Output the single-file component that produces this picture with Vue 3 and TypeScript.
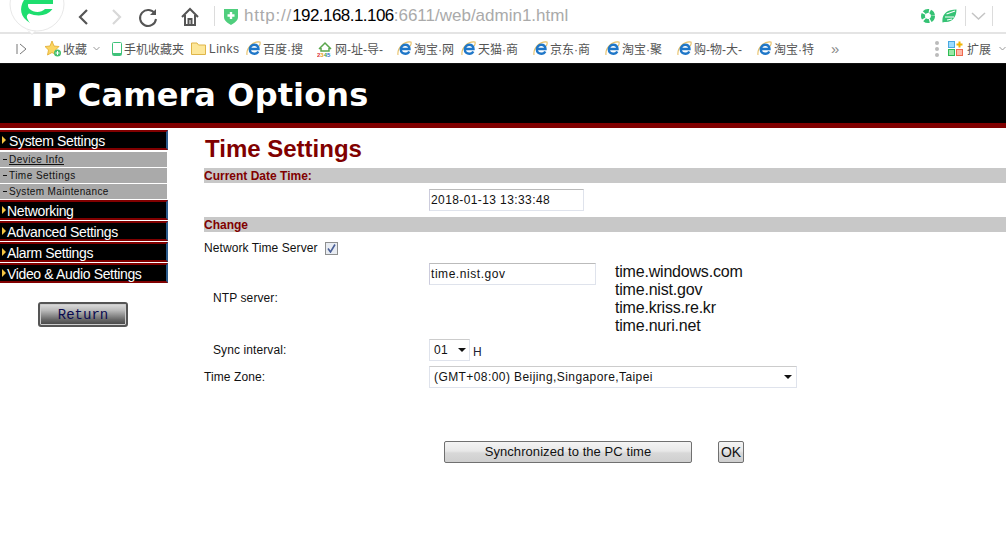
<script setup lang="ts">
interface Mark { label: string; kind: string; width: number }
const marks: Mark[] = [
  { label: '手机收藏夹', kind: 'phone', width: 79 },
  { label: 'Links', kind: 'folder', width: 55 },
  { label: '百度·搜', kind: 'ie', width: 71 },
  { label: '网-址-导-', kind: 'home', width: 80 },
  { label: '淘宝·网', kind: 'ie', width: 64 },
  { label: '天猫·商', kind: 'ie', width: 72 },
  { label: '京东·商', kind: 'ie', width: 72 },
  { label: '淘宝·聚', kind: 'ie', width: 72 },
  { label: '购-物-大-', kind: 'ie', width: 80 },
  { label: '淘宝·特', kind: 'ie', width: 75 }
]
const subs = ['Device Info', 'Time Settings', 'System Maintenance']
const menus = ['Networking', 'Advanced Settings', 'Alarm Settings', 'Video & Audio Settings']
const servers = ['time.windows.com', 'time.nist.gov', 'time.kriss.re.kr', 'time.nuri.net']
</script>

<template>
  <div class="page">
    <svg class="logo" width="70" height="36" viewBox="0 0 70 36">
      <path d="M28 30.500 L32 34.500 L36 30.500" fill="#fff" stroke="#e6e6e6"/>
      <circle cx="37" cy="4" r="27" fill="#fff" stroke="#e8e8e8"/>
      <path d="M27 0 H53 V4 H27 Z" fill="#1ede6f"/>
      <path d="M24 0 C19 8 20 17 30 23 C26 18 26 15 29 13.500 C38 17 47 16 52.500 9 H45 C41 13 34 13 29.500 9 C27 6 28 3 30 0 Z" fill="#1ede6f"/>
    </svg>
    <div class="toolbar">
      <svg class="nav" width="24" height="24" viewBox="0 0 24 24"><path d="M15 5 L8 12 L15 19" fill="none" stroke="#555" stroke-width="2.200"/></svg>
      <svg class="nav" width="24" height="24" viewBox="0 0 24 24"><path d="M9 5 L16 12 L9 19" fill="none" stroke="#d8d8d8" stroke-width="2.200"/></svg>
      <svg class="nav" width="24" height="24" viewBox="0 0 24 24"><path d="M19 9 A8 8 0 1 0 20 14" fill="none" stroke="#555" stroke-width="2"/><path d="M20 4 V10 H14 Z" fill="#555"/></svg>
      <svg class="nav home" width="24" height="24" viewBox="0 0 24 24"><path d="M4 12 L12 4 L20 12 M7 10 V20 H17 V10 M10.500 20 V14 H13.500 V20" fill="none" stroke="#555" stroke-width="2"/></svg>
      <span class="divider"></span>
      <svg class="shield" width="14" height="17" viewBox="0 0 14 17"><path d="M0 1 H14 V9 C14 13 10 15 7 17 C4 15 0 13 0 9 Z" fill="#4fce7d"/><path d="M7 4 V11 M3.500 7.500 H10.500" stroke="#fff" stroke-width="2.400"/></svg>
      <div class="url"><span class="scheme">http://</span><b>192.168.1.106</b><span class="rest">:6611/web/admin1.html</span></div>
      <svg class="tool-a" width="14" height="14" viewBox="0 0 14 14"><circle cx="7" cy="7" r="5" fill="none" stroke="#35c274" stroke-width="4" stroke-dasharray="5 1.300"/></svg>
      <svg class="tool-b" width="15" height="14" viewBox="0 0 15 14"><path d="M.5 13.500 C-.5 5 5 .5 14.500 .5 C14.500 8 10 14 2.500 13 Z" fill="#35c274"/><path d="M3 8 H12 M4.500 5 L13 2 M5 11 L10 10" stroke="#fff" stroke-width="1.100"/></svg>
      <span class="divider small"></span>
      <svg class="chev" width="15" height="9" viewBox="0 0 15 9"><path d="M1 1 L7.500 7 L14 1" fill="none" stroke="#c4c4c4" stroke-width="1.500"/></svg>
      <span class="divider tiny"></span>
      <span class="cut">目</span>
    </div>
    <div class="bookmarks">
      <svg class="side-toggle" width="11" height="12" viewBox="0 0 11 12"><path d="M1 1 V11 M4 1 L10 6 L4 11" fill="none" stroke="#777" stroke-width="1"/></svg>
      <svg class="star" width="16" height="16" viewBox="0 0 16 16"><path d="M7 0 L9 5 L14 5.500 L10.500 9 L11.500 14 L7 11.500 L2.500 14 L3.500 9 L0 5.500 L5 5 Z" fill="#fbd561" stroke="#e1aa2c" stroke-width=".8"/><circle cx="12.500" cy="12" r="3.500" fill="#45c06f"/><path d="M12.500 10 V14 M10.500 12 H14.500" stroke="#fff"/></svg>
      <span class="mark-text fav">收藏</span>
      <svg class="fav-caret" width="7" height="5" viewBox="0 0 7 5"><path d="M.5 1 L3.500 4 L6.500 1" fill="none" stroke="#999"/></svg>
      <div v-for="m in marks" :key="m.label + m.width" class="mark" :class="'mark-' + m.kind" :style="{ width: m.width + 'px' }">
        <svg v-if="m.kind === 'phone'" width="10" height="14" viewBox="0 0 10 14"><rect x=".5" y=".5" width="9" height="13" rx="1" fill="#fff" stroke="#3fc27a"/><rect x="1" y="11" width="8" height="2" fill="#3fc27a"/></svg>
        <svg v-else-if="m.kind === 'folder'" width="15" height="13" viewBox="0 0 15 13"><path d="M.5 12.500 V1 H6 L7.500 3 H14.500 V12.500 Z" fill="#fde79a" stroke="#dfb548"/></svg>
        <svg v-else-if="m.kind === 'home'" width="16" height="16" viewBox="0 0 16 16"><path d="M2 8 L8 2 L14 8 M4 7 V10 H12 V7" fill="none" stroke="#5aa64c" stroke-width="1.500"/><text x="0" y="16" font-size="6" font-weight="700" font-family="Liberation Sans, sans-serif"><tspan fill="#d33">2</tspan><tspan fill="#e9a31b">3</tspan><tspan fill="#3a9a44">4</tspan><tspan fill="#2b70c9">5</tspan></text></svg>
        <svg v-else width="15" height="15" viewBox="0 0 15 15"><path d="M1 14 C0 7 7 0 14 1 C14.500 3 14 4 13 5" fill="none" stroke="#e6c067" stroke-width="1.100"/><path d="M4 8 H12.500 C12.500 5 10.500 3.800 8.300 3.800 C5.500 3.800 3.800 6 3.800 8.500 C3.800 11 5.800 12.700 8.300 12.700 C10 12.700 11.500 12 12.300 10.500" fill="none" stroke="#1f77c8" stroke-width="2.400"/></svg>
        <span class="mark-text">{{ m.label }}</span>
      </div>
      <span class="more">»</span>
      <span class="grip"><i></i><i></i><i></i></span>
      <svg class="ext" width="15" height="15" viewBox="0 0 15 15"><rect x=".5" y=".5" width="6" height="6" fill="#9bdcff" stroke="#4aa8e0"/><rect x=".5" y="8.500" width="6" height="6" fill="#9be8a8" stroke="#2fbb54"/><rect x="8.500" y="8.500" width="6" height="6" fill="#ffb9a8" stroke="#ee6a50"/><path d="M11.500 .5 V6.500 M8.500 3.500 H14.500" stroke="#f0b400" stroke-width="2"/></svg>
      <span class="mark-text ext-text">扩展</span>
      <svg class="ext-caret" width="7" height="5" viewBox="0 0 7 5"><path d="M.5 1 L3.500 4 L6.500 1" fill="none" stroke="#999"/></svg>
    </div>

    <header class="banner"><h1>IP Camera Options</h1></header>

    <div class="body">
      <aside class="sidebar">
        <div class="menu first"><span class="arrow"></span><span class="menu-label">System Settings</span></div>
        <div class="subs">
          <div v-for="(s, i) in subs" :key="s" class="sub" :class="{ active: i === 0, narrow: i === 2 }"><span class="dash"></span><span class="sub-label">{{ s }}</span></div>
        </div>
        <div v-for="m in menus" :key="m" class="menu"><span class="arrow"></span><span class="menu-label">{{ m }}</span></div>
        <div class="return-wrap"><button class="return" type="button">Return</button></div>
      </aside>

      <main class="content">
        <h2>Time Settings</h2>
        <div class="bar">Current Date Time:</div>
        <div class="row date-row">
          <div class="field date">2018-01-13 13:33:48</div>
        </div>
        <div class="bar">Change</div>
        <div class="row check-row">
          <span class="label">Network Time Server</span>
          <span class="check"><svg width="9" height="9" viewBox="0 0 9 9"><path d="M1 4.500 L3.500 8 L8 .5" fill="none" stroke="#4a5f97" stroke-width="1.600"/></svg></span>
        </div>
        <div class="grid ntp">
          <span class="label indented ntp-label">NTP server:</span>
          <div class="field-wrap">
            <div class="field ntp-field">time.nist.gov</div>
            <div class="servers"><div v-for="s in servers" :key="s">{{ s }}</div></div>
          </div>
        </div>
        <div class="grid sync">
          <span class="label indented">Sync interval:</span>
          <div class="sync-value">
            <div class="select short"><span>01</span><i class="caret"></i></div>
            <span class="unit">H</span>
          </div>
        </div>
        <div class="grid zone">
          <span class="label">Time Zone:</span>
          <div class="select wide"><span>(GMT+08:00) Beijing,Singapore,Taipei</span><i class="caret"></i></div>
        </div>
        <div class="actions">
          <button class="btn pc" type="button">Synchronized to the PC time</button>
          <button class="btn ok" type="button">OK</button>
        </div>
      </main>
    </div>
  </div>
</template>

<style>
html, body { margin: 0; background: #fff; overflow: hidden; }
</style>

<style scoped>
.page { width: 1006px; height: 551px; position: relative; overflow: hidden; font-family: "Liberation Sans", Arial, sans-serif; background: #fff; }
.logo { position: absolute; left: 0; top: 0; z-index: 2; display: block; }
.toolbar { height: 32px; border-bottom: 2px solid #e4e4e4; display: flex; align-items: center; padding-left: 72px; }
.nav { flex: none; margin-right: 8px; margin-top: 1px; }
.home { margin-left: 10px; margin-right: 5px; }
.divider { width: 1px; height: 20px; background: #dcdcdc; flex: none; margin-left: 7px; }
.shield { margin-left: 9px; flex: none; }
.url { margin-left: 6px; font-size: 17px; width: 671px; color: #aaa; white-space: nowrap; flex: none; }
.scheme { letter-spacing: .8px; }
.url b { color: #000; font-weight: 400; letter-spacing: -.55px; }
.tool-a { flex: none; margin-left: 6px; }
.tool-b { flex: none; margin-left: 7px; }
.divider.small { margin-left: 8px; }
.chev { flex: none; margin-left: 5px; }
.divider.tiny { margin-left: 6px; }
.cut { color: #aaa; font: 13px "Noto Sans CJK SC", sans-serif; margin-left: 13px; }
.bookmarks { height: 29px; border-bottom: 1px solid #111; display: flex; align-items: center; padding-left: 16px; }
.side-toggle { flex: none; }
.star { flex: none; margin-left: 18px; }
.mark-text { font: 12px "Liberation Sans", "Noto Sans CJK SC", sans-serif; color: #555; white-space: nowrap; }
.fav { margin-left: 2px; }
.fav-caret { flex: none; margin-left: 6px; }
.ext-caret { flex: none; margin-left: 8px; }
.mark { flex: none; display: flex; align-items: center; gap: 2px; }
.mark-folder { gap: 3px; }
.mark-folder .mark-text { letter-spacing: .5px; }
.fav-caret + .mark { margin-left: 12px; }
.more { color: #888; font-size: 15px; margin-left: -1px; width: 101px; flex: none; }
.grip { width: 5px; flex: none; display: flex; flex-direction: column; gap: 2px; margin-left: 3px; }
.grip i { width: 4px; height: 4px; border-radius: 50%; background: #bbb; }
.ext { flex: none; margin-left: 8px; }
.ext-text { margin-left: 4px; }
.banner { height: 59px; background: #000; border-bottom: 5px solid #800000; display: flex; align-items: center; padding-left: 31px; }
.banner h1 { margin: 0; color: #fff; font: 700 32px "DejaVu Sans", sans-serif; letter-spacing: .12px; padding-top: 2px; }
.body { display: flex; }
.sidebar { width: 168px; flex: none; padding-top: 2px; }
.menu { height: 20px; margin-bottom: 1px; box-sizing: border-box; background: #000; border-top: 2px solid #800000; border-bottom: 2px solid #800000; border-right: 2px solid #2a5a8c; color: #fff; font-size: 14px; line-height: 16px; display: flex; align-items: center; white-space: nowrap; letter-spacing: -.35px; padding-left: 2px; }
.menu-label { padding-top: 1px; }
.arrow { width: 0; height: 0; border-left: 4px solid #f5c542; border-top: 4px solid transparent; border-bottom: 4px solid transparent; margin-right: 1px; flex: none; }
.menu.first .arrow { margin-right: 3px; }
.subs { margin-bottom: 1px; padding-top: 1px; }
.sub { height: 15px; margin-bottom: 1px; background: #aaa; width: 167px; display: flex; align-items: center; font-size: 10px; color: #111; padding-left: 3px; box-sizing: border-box; letter-spacing: .45px; }
.dash { width: 4px; height: 1px; background: #111; margin-right: 2px; flex: none; }
.active .sub-label { text-decoration: underline; }
.narrow { letter-spacing: .35px; }
.return-wrap { display: flex; justify-content: flex-start; padding: 18px 0 0 38px; }
.return { width: 90px; height: 25px; box-sizing: border-box; border: 2px solid #555; outline: 1px solid #ccc; outline-offset: -3px; border-radius: 3px; background: linear-gradient(#ddd, #bbb 30%, #666 75%, #444); color: #0a0a50; font: 14px "Liberation Mono", monospace; padding: 0; }
.content { flex: 1; padding: 0 0 0 36px; min-width: 0; }
h2 { margin: 0; height: 40px; padding-top: 7px; box-sizing: border-box; color: #800000; font-size: 24px; line-height: 28px; font-weight: 700; padding-left: 1px; }
.bar { height: 15px; background: #c8c8c8; color: #800000; font-size: 12px; line-height: 17px; font-weight: 700; }
.row { display: flex; align-items: center; }
.date-row { height: 34px; padding-left: 225px; }
.field { box-sizing: border-box; border: 1px solid #dfe3ec; border-top-color: #bbb; border-left-color: #ccd; height: 22px; line-height: 20px; font-size: 12px; padding-left: 1px; color: #111; letter-spacing: .4px; }
.date { width: 155px; }
.check-row { height: 31px; padding-top: 1px; box-sizing: border-box; }
.label { font-size: 12px; color: #111; letter-spacing: .1px; white-space: nowrap; }
.check { width: 13px; height: 13px; box-sizing: border-box; border: 1px solid #8e8f8f; background: #e8ecf2; margin-left: 7px; display: flex; align-items: center; justify-content: center; }
.check-row .label { letter-spacing: .08px; }
.grid { display: grid; grid-template-columns: 225px 1fr; align-items: center; }
.indented { padding-left: 9px; }
.ntp { height: 73px; }
.ntp-label { padding-bottom: 4px; }
.field-wrap { display: flex; align-items: flex-start; height: 73px; }
.ntp-field { width: 167px; letter-spacing: .55px; }
.servers { margin-left: 19px; font-size: 16px; line-height: 18px; color: #111; letter-spacing: -.2px; }
.sync { height: 31px; align-items: flex-start; padding-top: 3px; box-sizing: border-box; }
.sync .label { padding-top: 4px; }
.sync-value { display: flex; align-items: flex-end; }
.select { box-sizing: border-box; height: 22px; border: 1px solid #dfe3ec; border-top-color: #ccc; display: flex; align-items: center; justify-content: space-between; font-size: 12px; color: #111; letter-spacing: .42px; }
.short { width: 41px; padding: 0 3px 0 4px; }
.wide { width: 368px; padding: 0 4px; }
.caret { width: 0; height: 0; border-left: 4px solid transparent; border-right: 4px solid transparent; border-top: 4px solid #111; flex: none; }
.unit { font-size: 12px; color: #223; margin-left: 3px; margin-bottom: 2px; }
.zone { height: 22px; margin-top: -1px; }
.actions { display: flex; padding: 53px 0 0 240px; align-items: center; }
.btn { box-sizing: border-box; height: 22px; border: 1px solid #707070; border-radius: 2px; background: linear-gradient(#f4f4f4, #e8e8e8 45%, #d8d8d8 55%, #cfcfcf); color: #111; font-family: "Liberation Sans", Arial, sans-serif; font-size: 13px; padding: 0; letter-spacing: .07px; }
.pc { width: 248px; padding-bottom: 2px; }
.ok { width: 26px; margin-left: 26px; font-size: 14px; letter-spacing: 0; }
</style>
